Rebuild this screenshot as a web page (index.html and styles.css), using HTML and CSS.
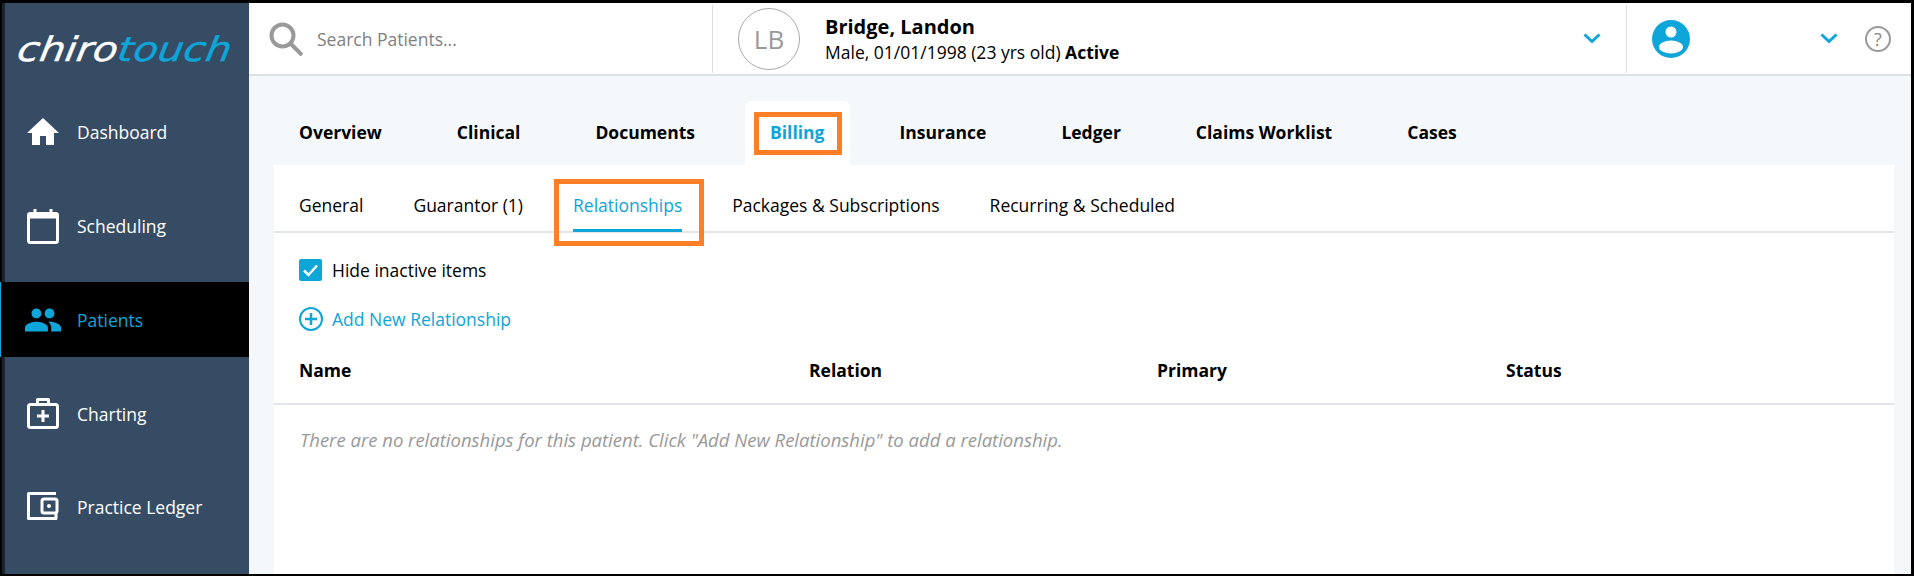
FILE: index.html
```html
<!DOCTYPE html>
<html>
    <head>
        <meta charset="utf-8" />
        <title>ChiroTouch</title>
        <link rel="stylesheet" href="styles.css">
    </head>
    <body>
        <div class="frame">
            <nav class="sidebar">
                <div class="logo"><div class="logo-text">chiro<span>touch</span></div></div>

                <a class="nav-item">
                    <svg class="nav-icon" viewBox="0 0 36 36"><path fill="#fff" d="M18 4 2 19h5v12h8v-9h6v9h8V19h5z"/></svg>
                    Dashboard
                </a>
                <a class="nav-item">
                    <svg class="nav-icon" viewBox="0 0 36 36" fill="none" stroke="#fff" stroke-width="3" stroke-linejoin="round"><rect x="3.5" y="5.5" width="29" height="29" rx="2"/><path d="M4 9h28V6H4z" fill="#fff"/><path d="M10 1v5M26 1v5"/></svg>
                    Scheduling
                </a>
                <a class="nav-item active">
                    <svg class="nav-icon" viewBox="1 1 22 22"><path fill="#0ea5d9" d="M16 11c1.66 0 2.99-1.34 2.99-3S17.66 5 16 5c-1.66 0-3 1.34-3 3s1.34 3 3 3zm-8 0c1.66 0 2.99-1.34 2.99-3S9.66 5 8 5C6.34 5 5 6.34 5 8s1.34 3 3 3zm0 2c-2.33 0-7 1.17-7 3.5V19h14v-2.5c0-2.33-4.67-3.5-7-3.5zm8 0c-.29 0-.62.02-.97.05 1.16.84 1.97 1.97 1.97 3.45V19h6v-2.5c0-2.33-4.67-3.5-7-3.5z"/></svg>
                    Patients
                </a>
                <a class="nav-item charting">
                    <svg class="nav-icon" viewBox="0 0 36 36" fill="none" stroke="#fff" stroke-width="3" stroke-linejoin="round"><rect x="3.5" y="8.500" width="29" height="23" rx="2"/><path d="M12.500 8V3.500h11V8"/><path d="M18 14v12M12 20h12"/></svg>
                    Charting
                </a>
                <a class="nav-item">
                    <svg class="nav-icon" viewBox="0 0 36 36" fill="none" stroke="#fff" stroke-width="3" stroke-linejoin="round"><path d="M31 4.500H3.500v25H31V25"/><rect x="17" y="10" width="15" height="14" rx="2"/><circle cx="24" cy="17" r="2" fill="#fff" stroke="none"/></svg>
                    Practice Ledger
                </a>
            </nav>

            <div class="main">
                <header class="topbar">
                    <div class="search">
                        <svg class="search-icon" viewBox="0 0 34 34" fill="none" stroke="#999" stroke-width="4"><circle cx="13.500" cy="13.500" r="11"/><path d="M21.500 21.500 33 33"/></svg>
                        <span>Search Patients...</span>
                    </div>
                    <div class="patient">
                        <div class="avatar">LB</div>
                        <div class="patient-info">
                            <div class="patient-name">Bridge, Landon</div>
                            <div class="patient-meta">Male, 01/01/1998 (23 yrs old) <b>Active</b></div>
                        </div>
                        <svg class="chevron" viewBox="0 0 18 11"><path d="M1.500 1.500 9 8.500l7.500-7"/></svg>
                    </div>
                    <div class="user">
                        <svg class="user-icon" viewBox="0 0 38 38"><circle cx="19" cy="19" r="19" fill="#0ea5d9"/><circle cx="19" cy="12" r="5.500" fill="#fff"/><ellipse cx="19" cy="27" rx="12" ry="6.500" fill="#fff"/></svg>
                        <svg class="chevron" viewBox="0 0 18 11"><path d="M1.500 1.500 9 8.500l7.500-7"/></svg>
                        <div class="help">?</div>
                    </div>
                </header>

                <div class="content">
                    <div class="tabs">
                        <a class="tab">Overview</a>
                        <a class="tab">Clinical</a>
                        <a class="tab">Documents</a>
                        <a class="tab active">Billing<i class="mark mark-billing"></i></a>
                        <a class="tab">Insurance</a>
                        <a class="tab">Ledger</a>
                        <a class="tab">Claims Worklist</a>
                        <a class="tab">Cases</a>
                    </div>

                    <div class="panel">
                        <div class="subtabs">
                            <a class="subtab">General</a>
                            <a class="subtab">Guarantor (1)</a>
                            <a class="subtab active">Relationships<i class="mark mark-rel"></i></a>
                            <a class="subtab">Packages &amp; Subscriptions</a>
                            <a class="subtab">Recurring &amp; Scheduled</a>
                        </div>

                        <label class="check">
                            <svg class="check-box" viewBox="0 0 23 22"><rect width="23" height="22" rx="2" fill="#0ea5d9"/><path d="M5 11.500 9.500 16 18 6.500" fill="none" stroke="#fff" stroke-width="2.500"/></svg>
                            Hide inactive items
                        </label>

                        <a class="add">
                            <svg class="add-icon" viewBox="0 0 24 24" fill="none" stroke="#0ea5d9" stroke-width="2"><circle cx="12" cy="12" r="11"/><path d="M12 6v12M6 12h12" stroke-width="2.500"/></svg>
                            Add New Relationship
                        </a>

                        <div class="table-head">
                            <div>Name</div>
                            <div>Relation</div>
                            <div>Primary</div>
                            <div>Status</div>
                        </div>

                        <p class="empty">There are no relationships for this patient. Click "Add New Relationship" to add a relationship.</p>
                    </div>
                </div>
            </div>
        </div>
    </body>
</html>
```

FILE: styles.css
```css
* {
    box-sizing: border-box;
}

body {
    margin: 0;
    font-family: "Open Sans", sans-serif;
    font-size: 17.5px;
    color: #000;
    overflow: hidden;
}

.frame {
    width: 1914px;
    height: 576px;
    border-style: solid;
    border-color: #000;
    border-width: 3px 3px 2px 2px;
    display: flex;
}

/* sidebar */
.sidebar {
    width: 247px;
    flex: none;
    background: #364c64;
    border-left: 3px solid #1a2430;
    display: flex;
    flex-direction: column;
}

.logo {
    height: 92px;
    padding: 24px 0 0 13px;
}

.logo-text {
    font-family: "DejaVu Sans", sans-serif;
    font-style: italic;
    font-size: 34px;
    line-height: 44px;
    color: #fff;
    white-space: nowrap;
    transform-origin: left center;
    transform: scaleX(1.185) skewX(-8deg);
    -webkit-text-stroke: 0.4px currentColor;
}

.logo-text span {
    color: #0ea5d9;
}

.nav-item {
    height: 74px;
    margin-bottom: 20px;
    display: flex;
    align-items: center;
    gap: 16px;
    padding-left: 20px;
    color: #fff;
    position: relative;
}

.nav-item.charting {
    margin-bottom: 19px;
}

.nav-item.active {
    background: #000;
    color: #0ea5d9;
    height: 75px;
    margin-top: -1px;
    margin-left: -3px;
    padding-left: 23px;
}

.nav-item.active::before {
    content: "";
    position: absolute;
    left: -2px;
    top: 0;
    bottom: 0;
    width: 1px;
    background: #0ea5d9;
}

.nav-icon {
    width: 36px;
    height: 36px;
    flex: none;
}

/* top bar */
.main {
    flex: 1;
    display: flex;
    flex-direction: column;
    min-width: 0;
}

.topbar {
    height: 73px;
    flex: none;
    background: #fff;
    border-bottom: 2px solid #dde1e5;
    display: flex;
    align-items: center;
}

.search {
    width: 464px;
    height: 68px;
    border-right: 1px solid #ddd;
    display: flex;
    align-items: center;
    gap: 14px;
    padding-left: 20px;
    color: #808080;
}

.search-icon {
    width: 34px;
    height: 34px;
}

.patient {
    width: 914px;
    height: 68px;
    border-right: 1px solid #ddd;
    display: flex;
    align-items: center;
    padding: 0 25px;
}

.avatar {
    width: 62px;
    height: 62px;
    border: 1px solid #aaa;
    border-radius: 50%;
    display: flex;
    align-items: center;
    justify-content: center;
    font-size: 26px;
    color: #999;
    margin-right: 25px;
}

.patient-info {
    flex: 1;
}

.patient-name {
    font-size: 20px;
    font-weight: 700;
    line-height: 26px;
}

.patient-meta {
    line-height: 24px;
}

.chevron {
    width: 18px;
    height: 11px;
    fill: none;
    stroke: #0ea5d9;
    stroke-width: 3;
}

.user {
    flex: 1;
    height: 68px;
    display: flex;
    align-items: center;
    padding-left: 25px;
}

.user-icon {
    width: 38px;
    height: 38px;
    margin-right: 130px;
}

.help {
    width: 26px;
    height: 26px;
    margin-left: 27px;
    border: 2px solid #999;
    border-radius: 50%;
    color: #888;
    font-size: 18px;
    line-height: 22px;
    text-align: center;
}

/* tabs */
.content {
    flex: 1;
    background: #f4f8fb;
    padding: 25px 17px 0 25px;
    display: flex;
    flex-direction: column;
    min-height: 0;
}

.tabs {
    display: flex;
    gap: 25px;
    height: 64px;
    flex: none;
}

.tab {
    padding: 0 25px;
    font-weight: 700;
    line-height: 62px;
    position: relative;
    white-space: nowrap;
}

.tab.active {
    background: #fff;
    color: #0ea5d9;
    border-radius: 6px 6px 0 0;
}

.panel {
    flex: 1;
    background: #fff;
}

.subtabs {
    display: flex;
    gap: 50px;
    height: 68px;
    padding-left: 25px;
    border-bottom: 2px solid #e3e5e8;
}

.subtab {
    padding-top: 27px;
    line-height: 26px;
    position: relative;
    white-space: nowrap;
}

.subtab.active {
    color: #0ea5d9;
    height: 67px;
    border-bottom: 3px solid #0ea5d9;
}

/* the orange call-outs sit on top of the screenshot */
.mark {
    position: absolute;
    border: 5px solid #ff7f27;
    pointer-events: none;
}

.mark-billing {
    left: 9px;
    right: 8px;
    top: 11px;
    bottom: 10px;
}

.mark-rel {
    left: -19px;
    right: -22px;
    top: 14px;
    bottom: -17px;
}

.check {
    display: flex;
    align-items: center;
    gap: 10px;
    margin: 25px 0 0 25px;
    height: 24px;
}

.check-box {
    width: 23px;
    height: 22px;
}

.add {
    display: flex;
    align-items: center;
    gap: 9px;
    margin: 25px 0 0 25px;
    height: 24px;
    color: #0ea5d9;
}

.add-icon {
    width: 24px;
    height: 24px;
}

.table-head {
    display: grid;
    grid-template-columns: 510px 348px 349px 1fr;
    margin-top: 15px;
    height: 59px;
    padding: 12px 0 0 25px;
    border-bottom: 2px solid #e3e5e8;
    font-weight: 700;
}

.empty {
    margin: 22px 0 0 26px;
    font-size: 18.5px;
    font-style: italic;
    color: #999;
}
```
